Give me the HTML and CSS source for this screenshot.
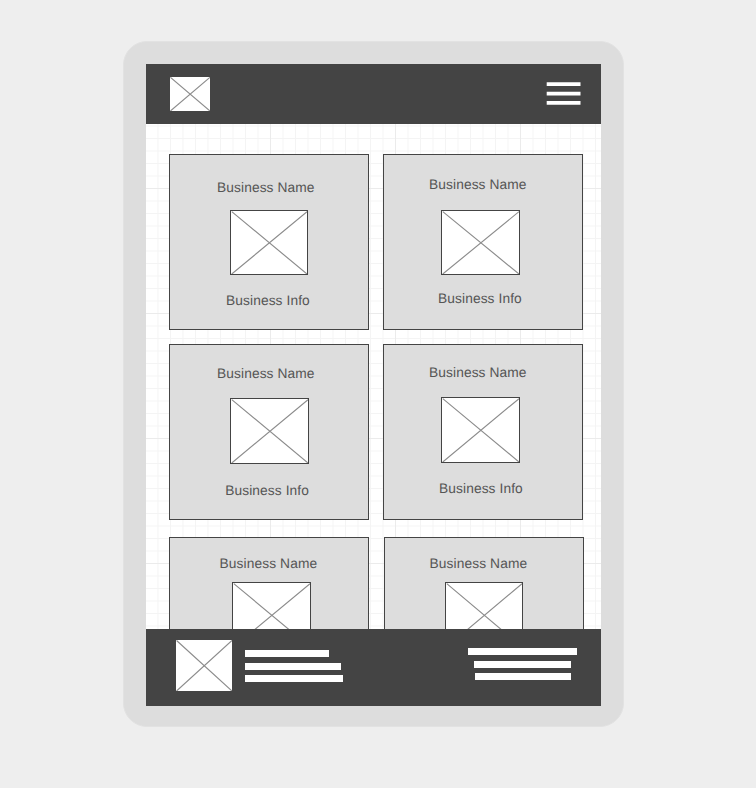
FILE: index.html
```html
<!DOCTYPE html>
<html lang="en">
<head>
<meta charset="utf-8">
<title>Business directory wireframe</title>
<link rel="stylesheet" href="styles.css">
</head>
<body>
<svg class="defs" width="0" height="0">
  <symbol id="cross" viewBox="0 0 100 100" preserveAspectRatio="none">
    <path d="M1 1 100 100M100 1 1 100" fill="none" stroke="#8c8c8c" stroke-width="1.15" vector-effect="non-scaling-stroke"/>
  </symbol>
</svg>
<div class="device">
  <div class="screen">
    <header class="topbar">
      <svg class="logo"><use href="#cross"/></svg>
      <svg class="menu" viewBox="0 0 34 24"><path d="M-.3 .3H33.5V3.9H-.3ZM-.3 9.8H33.5V13.5H-.3ZM-.3 19H33.5V22.7H-.3Z" fill="#fff"/></svg>
    </header>
    <main class="grid">
      <article class="card c1">
        <h2 class="name">Business Name</h2>
        <svg class="pic"><use href="#cross"/></svg>
        <p class="info">Business Info</p>
      </article>
      <article class="card c2">
        <h2 class="name">Business Name</h2>
        <svg class="pic"><use href="#cross"/></svg>
        <p class="info">Business Info</p>
      </article>
      <article class="card c3">
        <h2 class="name">Business Name</h2>
        <svg class="pic"><use href="#cross"/></svg>
        <p class="info">Business Info</p>
      </article>
      <article class="card c4">
        <h2 class="name">Business Name</h2>
        <svg class="pic"><use href="#cross"/></svg>
        <p class="info">Business Info</p>
      </article>
      <article class="card c5">
        <h2 class="name">Business Name</h2>
        <svg class="pic"><use href="#cross"/></svg>
      </article>
      <article class="card c6">
        <h2 class="name">Business Name</h2>
        <svg class="pic"><use href="#cross"/></svg>
      </article>
    </main>
    <footer class="footer">
      <svg class="footer-logo"><use href="#cross"/></svg>
      <div class="lines lines-left">
        <span class="line w84"></span>
        <span class="line w96"></span>
        <span class="line w98"></span>
      </div>
      <div class="lines lines-right">
        <span class="line w109"></span>
        <span class="line w97"></span>
        <span class="line w96"></span>
      </div>
    </footer>
  </div>
</div>
</body>
</html>
```
FILE: styles.css
```css
* { box-sizing: border-box; }

body {
  margin: 0;
  height: 788px;
  overflow: hidden;
  display: flex;
  align-items: flex-start;
  padding: 41px 0 0 123px;
  background: #eee;
  font-family: "Liberation Sans", Arial, sans-serif;
}

.defs { display: none; }

.device {
  flex: none;
  width: 501px;
  height: 686px;
  padding: 22px 22px 20px;
  border: 1px solid #e2e2e2;
  border-radius: 24px;
  background: #ddd;
}

.screen {
  display: flex;
  flex-direction: column;
  width: 455px;
  height: 642px;
  overflow: hidden;
  background: #fff;
}

.topbar {
  flex: none;
  display: flex;
  justify-content: space-between;
  height: 60px;
  padding: 13px 20px 0 24px;
  background: #444;
}

.logo { width: 40px; height: 34px; background: #fff; }
.menu { width: 34px; height: 24px; margin-top: 5px; overflow: visible; }

/* 12.5px graph paper with a stronger line every ten squares */
.grid {
  flex: none;
  display: grid;
  grid-template-columns: 200px 200px;
  grid-template-rows: 176px 176px 176px;
  column-gap: 14px;
  row-gap: 14px;
  height: 505px;
  padding: 30px 0 0 23px;
  overflow: hidden;
  background-color: #fff;
  background-image:
    linear-gradient(90deg, #ebebeb 1px, transparent 1px),
    linear-gradient(#ebebeb 1px, transparent 1px),
    linear-gradient(90deg, #f4f4f4 1px, transparent 1px),
    linear-gradient(#f4f4f4 1px, transparent 1px);
  background-size: 125px 125px, 125px 125px, 12.5px 12.5px, 12.5px 12.5px;
  background-position: 124px 0, 0 64px, 11.5px 0, 0 1.5px;
}

.card {
  display: flex;
  flex-direction: column;
  align-items: flex-start;
  width: 200px;
  height: 176px;
  border: 1px solid #444;
  background: #ddd;
}

.name, .info {
  margin: 0;
  padding-top: 1px;
  height: 16px;
  font-size: 13.75px;
  letter-spacing: 0.1px;
  text-rendering: geometricPrecision;
  font-weight: 400;
  line-height: 16px;
  white-space: nowrap;
  color: #555;
}

.pic {
  flex: none;
  width: 79px;
  height: 66px;
  border: 1px solid #444;
  background: #fff;
}

.c1 .name { margin: 24px 0 0 47px; }
.c1 .pic { width: 78px; height: 65px; margin: 15px 0 17px 60px; }
.c1 .info { margin-left: 56px; }

.c2 .name { margin: 21px 0 0 45px; }
.c2 .pic { height: 65px; margin: 18px 0 15px 57px; }
.c2 .info { margin-left: 54px; }

.c3 .name { margin: 20px 0 0 47px; }
.c3 .pic { margin: 17px 0 18px 60px; }
.c3 .info { margin-left: 55.2px; }

.c4 .name { margin: 19px 0 0 45px; }
.c4 .pic { margin: 17px 0 17px 57px; }
.c4 .info { margin-left: 55px; }

.c5, .c6 { margin-top: 3px; }
.c5 .name { margin: 17px 0 0 49.6px; }
.c5 .pic { margin: 11px 0 0 62px; }
.c6 { margin-left: 1px; }
.c6 .name { margin: 17px 0 0 44.6px; }
.c6 .pic { width: 78px; margin: 11px 0 0 60px; }

.footer {
  flex: none;
  display: flex;
  align-items: flex-start;
  height: 77px;
  padding: 11px 24px 0 30px;
  background: #444;
}

.footer-logo { flex: none; width: 56px; height: 51px; background: #fff; }

.lines { display: flex; flex-direction: column; }
.lines-left { margin: 10px 0 0 13px; }
.lines-right { margin: 8px 0 0 auto; align-items: flex-end; }

.line { height: 7px; background: #fff; }
.line:nth-child(2) { margin: 6px 0 5px; }
.lines-right .line:nth-child(n+2) { margin-right: 6px; }

.w84 { width: 84px; }
.w96 { width: 96px; }
.w97 { width: 97px; }
.w98 { width: 98px; }
.w109 { width: 109px; }
```
